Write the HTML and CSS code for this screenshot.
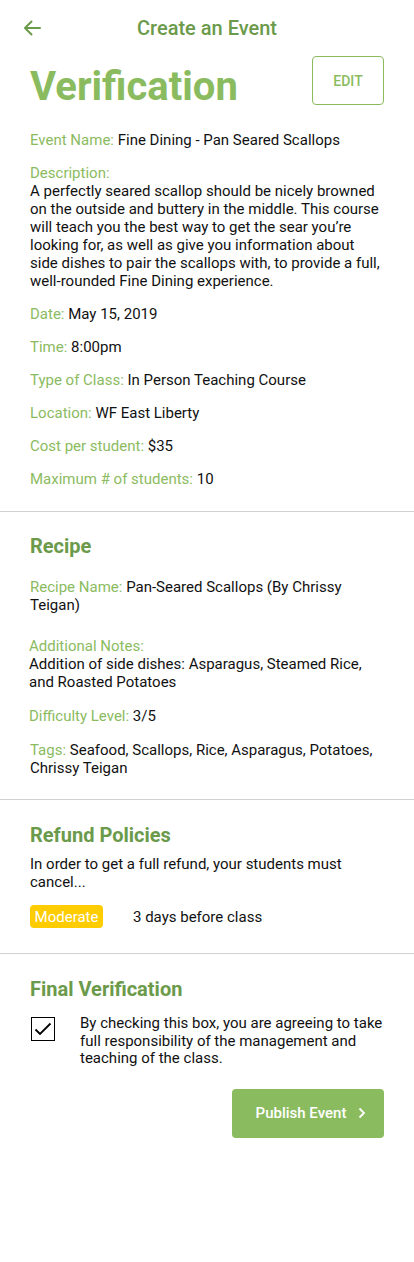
FILE: index.html
```html
<!DOCTYPE html>
<html lang="en">
<head>
<meta charset="utf-8">
<title>Create an Event</title>
<link rel="stylesheet" href="styles.css">
</head>
<body>
<div class="page">
  <header class="topbar">
    <button class="back" aria-label="Back">
      <svg width="18" height="16" viewBox="0 0 18 16"><path d="M17 8H2M8.5 1.5L2 8l6.5 6.5" fill="none" stroke="#6b9a4b" stroke-width="2" stroke-linecap="round" stroke-linejoin="round"/></svg>
    </button>
    <div class="topbar-title">Create an Event</div>
  </header>

  <section class="section first">
    <div class="title-row">
      <h1 class="page-title">Verification</h1>
      <button class="edit-btn">EDIT</button>
    </div>
    <div class="fields">
      <p class="field"><span class="label">Event Name:</span> Fine Dining - Pan Seared Scallops</p>
      <p class="field"><span class="label">Description:</span><br>A perfectly seared scallop should be nicely browned on the outside and buttery in the middle. This course will teach you the best way to get the sear you’re looking for, as well as give you information about side dishes to pair the scallops with, to provide a full, well-rounded Fine Dining experience.</p>
      <p class="field"><span class="label">Date:</span> May 15, 2019</p>
      <p class="field"><span class="label">Time:</span> 8:00pm</p>
      <p class="field"><span class="label">Type of Class:</span> In Person Teaching Course</p>
      <p class="field"><span class="label">Location:</span> WF East Liberty</p>
      <p class="field"><span class="label">Cost per student:</span> $35</p>
      <p class="field"><span class="label">Maximum # of students:</span> 10</p>
    </div>
  </section>

  <section class="section recipe-section">
    <h2 class="section-title">Recipe</h2>
    <div class="fields recipe">
      <p class="field"><span class="label">Recipe Name:</span> Pan-Seared Scallops (By Chrissy Teigan)</p>
      <p class="field notes"><span class="label">Additional Notes:</span><br>Addition of side dishes: Asparagus, Steamed Rice, and Roasted Potatoes</p>
      <p class="field notes"><span class="label">Difficulty Level:</span> 3/5</p>
      <p class="field"><span class="label">Tags:</span> Seafood, Scallops, Rice, Asparagus, Potatoes, Chrissy Teigan</p>
    </div>
  </section>

  <section class="section refund-section">
    <h2 class="section-title">Refund Policies</h2>
    <p class="refund-text">In order to get a full refund, your students must cancel...</p>
    <div class="policy">
      <span class="badge">Moderate</span>
      <span class="policy-text">3 days before class</span>
    </div>
  </section>

  <section class="section last">
    <h2 class="section-title">Final Verification</h2>
    <label class="agree">
      <span class="checkbox">
        <svg width="18" height="14" viewBox="0 0 18 14"><path d="M1.5 7.5l4.5 4.5L16.5 1.5" fill="none" stroke="#000" stroke-width="1.8"/></svg>
      </span>
      <span class="agree-text">By checking this box, you are agreeing to take full responsibility of the management and teaching of the class.</span>
    </label>
    <div class="actions">
      <button class="publish">Publish Event
        <svg width="8" height="12" viewBox="0 0 8 12"><path d="M1.5 1.5L6 6l-4.5 4.5" fill="none" stroke="#fff" stroke-width="1.8"/></svg>
      </button>
    </div>
  </section>
</div>
</body>
</html>
```

FILE: styles.css
```css
* { box-sizing: border-box; }
html, body { margin: 0; padding: 0; background: #fff; }
body {
  font-family: Roboto, "Liberation Sans", Arial, sans-serif;
  color: #111;
  font-size: 15px;
  line-height: 18px;
}
.page { width: 414px; }

.topbar {
  height: 56px;
  display: flex;
  align-items: center;
  justify-content: center;
  position: relative;
}
.back {
  position: absolute;
  left: 23px;
  top: 20px;
  border: 0;
  background: none;
  padding: 0;
  width: 18px;
  height: 16px;
  display: flex;
}
.topbar-title {
  color: #6b9a4b;
  font-size: 20px;
  font-weight: 500;
}

.section {
  border-bottom: 1px solid #d0d0d0;
  padding: 21px 30px 23px 30px;
}
.section.first { padding-top: 0; }
.recipe-section { padding-top: 22px; padding-bottom: 22px; }
.refund-section { padding-top: 23px; padding-bottom: 22px; }
.section.last { border-bottom: 0; padding-top: 23px; padding-bottom: 40px; }

.title-row {
  display: flex;
  justify-content: space-between;
  align-items: center;
  height: 49px;
}
.page-title {
  margin: 0;
  color: #8bbb5f;
  font-size: 40px;
  line-height: 48px;
  font-weight: 700;
  padding-top: 12px;
}
.edit-btn {
  width: 72px;
  height: 49px;
  border: 1px solid #8bbb5f;
  border-radius: 4px;
  background: #fff;
  color: #8bbb5f;
  font-family: inherit;
  font-size: 14px;
  font-weight: 500;
  padding: 0;
}

.fields {
  margin-top: 26px;
  display: flex;
  flex-direction: column;
  gap: 15px;
}
.field { margin: 0; }
.label { color: #8bbb5f; }

.section-title {
  margin: 0;
  color: #6b9a4b;
  font-size: 20px;
  line-height: 24px;
  font-weight: 700;
}
.fields.recipe { margin-top: 20px; gap: 16px; }
.fields.recipe .field:first-child { margin-bottom: 7px; }
.notes { margin-left: -1px; }

.refund-text { margin: 8px 0 0 0; }
.policy {
  margin-top: 14px;
  display: flex;
  align-items: center;
  gap: 30px;
  padding-bottom: 3px;
}
.badge {
  background: #ffcc00;
  color: #fff;
  border-radius: 4px;
  height: 23px;
  width: 73px;
  display: flex;
  align-items: center;
  justify-content: center;
  font-size: 15px;
}

.agree {
  margin-top: 14px;
  display: flex;
  align-items: flex-start;
  gap: 25px;
}
.checkbox {
  flex: none;
  width: 24px;
  height: 24px;
  margin-top: 2px;
  margin-left: 1px;
  border: 1.5px solid #000;
  display: flex;
  align-items: center;
  justify-content: center;
}
.agree-text { line-height: 17.5px; }

.actions {
  margin-top: 21px;
  display: flex;
  justify-content: flex-end;
}
.publish {
  width: 152px;
  height: 49px;
  border: 0;
  border-radius: 4px;
  background: #8bbb5f;
  color: #fff;
  font-family: inherit;
  font-size: 15px;
  font-weight: 500;
  display: flex;
  align-items: center;
  justify-content: center;
  gap: 12px;
  padding-left: 12px;
}
```
